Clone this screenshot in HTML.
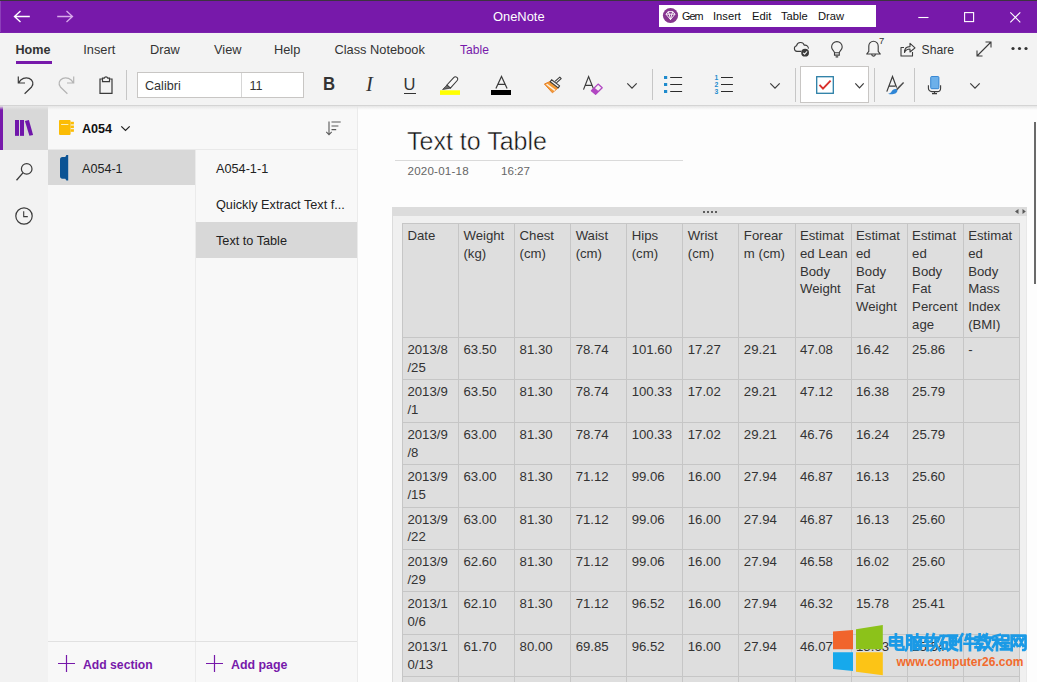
<!DOCTYPE html>
<html>
<head>
<meta charset="utf-8">
<title>OneNote</title>
<style>
*{box-sizing:border-box;margin:0;padding:0}
html,body{width:1037px;height:682px;overflow:hidden}
body{position:relative;background:#f3f3f3;font-family:"Liberation Sans",sans-serif;color:#222;font-size:12.8px}
.abs{position:absolute}
.t{position:absolute;white-space:nowrap;line-height:1}
svg{position:absolute;overflow:visible}
/* title bar */
#titlebar{left:0;top:0;width:1037px;height:32px;background:#7719aa}
#topline{left:0;top:0;width:1037px;height:1px;background:#3c3340}
#gem{left:659px;top:5px;width:216.700px;height:21.600px;background:#fff}
/* ribbon */
#ribbon{left:0;top:32px;width:1037px;height:73px;background:#f3f3f3}
#ribbonline{left:0;top:105px;width:1037px;height:1px;background:#d4d4d4}
#ribbonshadow{left:0;top:106px;width:1037px;height:4px;background:linear-gradient(#e6e6e6,rgba(240,240,240,0))}
#tbedge{left:0;top:32px;width:1037px;height:1px;background:#7b22ad}
#leftedge{left:0;top:1px;width:1px;height:31px;background:#8d3fba}
.sep{position:absolute;width:1px;background:#c6c6c6}
.box{position:absolute;background:#fff;border:1px solid #c8c6c4}
/* left */
#rail{left:0;top:105px;width:48px;height:577px;background:#f2f2f2}
#railsel{left:0;top:106px;width:48px;height:44px;background:#d8d8d8}
#railbar{left:0;top:106px;width:3px;height:44px;background:#7719aa}
#nav{left:48px;top:105px;width:310px;height:577px;background:#f8f8f8}
#secsel{left:48px;top:150px;width:147px;height:35px;background:#d8d8d8}
#pagesel{left:196px;top:222px;width:161px;height:36px;background:#d8d8d8}
#content{left:358px;top:105px;width:679px;height:577px;background:#fdfdfd}
.vline{position:absolute;width:1px;background:#ebebeb}
.hline{position:absolute;height:1px;background:#e1e1e1}
/* table */
#tcont{left:392px;top:207px;width:635px;height:475px;background:#f0f0f0;border-left:1px solid #dcdcdc;border-right:1px solid #e8e8e8}
#tbar{left:392px;top:207px;width:635px;height:9px;background:#dcdcdc}
table{position:absolute;left:402px;top:223px;border-collapse:collapse;table-layout:fixed;width:618px;font-size:13.2px;color:#333;background:#dedede}
td{border:1px solid #c6c6c6;vertical-align:top;padding:3px 0 0 4.400px;line-height:17.8px;white-space:nowrap;overflow:hidden}
tr.h td{height:114px}
tr.r td{height:42.4px}
</style>
</head>
<body>
<div class="abs" id="titlebar"></div>
<div class="abs" id="topline"></div>
<div class="abs" id="ribbon"></div>
<div class="abs" id="tbedge"></div>
<div class="abs" id="leftedge"></div>

<!-- TITLEBAR -->
<div id="tb">
<svg style="left:13.200px;top:9.800px" width="18" height="13" viewBox="0 0 18 13"><path d="M16.800 6.500H1.500M7.500 1L1.500 6.500L7.500 12" fill="none" stroke="#fff" stroke-width="1.4"/></svg>
<svg style="left:55.800px;top:9.800px" width="18" height="13" viewBox="0 0 18 13"><path d="M1.200 6.500H16.500M10.500 1L16.500 6.500L10.500 12" fill="none" stroke="#d9aaeb" stroke-width="1.3"/></svg>
<div class="t" style="left:493px;top:11px;color:#fff;font-size:12.900px">OneNote</div>
<div class="abs" id="gem"></div>
<svg style="left:662px;top:7.300px" width="17" height="17" viewBox="0 0 17 17"><circle cx="8.5" cy="8.5" r="7.600" fill="#86368f"/><path d="M4 7.2L6.2 4.6H10.8L13 7.2L8.5 12.6Z M4 7.2H13 M6.2 4.6L7.2 7.2L8.5 12.6L9.8 7.2L10.8 4.6" fill="none" stroke="#fff" stroke-width="0.9" stroke-linejoin="round"/></svg>
<div class="t" style="left:682px;top:10.500px;color:#111;font-size:10.800px;letter-spacing:-0.900px">Gem</div>
<div class="t" style="left:713px;top:10.500px;color:#111;font-size:11.200px">Insert</div>
<div class="t" style="left:752px;top:10.500px;color:#111;font-size:11.200px">Edit</div>
<div class="t" style="left:781px;top:10.500px;color:#111;font-size:11.200px">Table</div>
<div class="t" style="left:818px;top:10.500px;color:#111;font-size:11.200px">Draw</div>
<svg style="left:917.500px;top:10.700px" width="12" height="12" viewBox="0 0 12 12"><path d="M0.300 6.500H10.500" stroke="#fff" stroke-width="1.100"/></svg>
<svg style="left:963.800px;top:11.800px" width="11" height="11" viewBox="0 0 11 11"><rect x="0.600" y="0.600" width="9" height="9" fill="none" stroke="#fff" stroke-width="1.100"/></svg>
<svg style="left:1009.800px;top:11.700px" width="11" height="11" viewBox="0 0 11 11"><path d="M0.300 0.300L10.300 10.300M10.300 0.300L0.300 10.300" stroke="#fff" stroke-width="1.100"/></svg>
</div>

<!-- TABS -->
<div id="tabs">
<div class="t" style="left:15.5px;top:44px;font-weight:bold;font-size:12.6px;color:#333">Home</div>
<div class="abs" style="left:16px;top:61px;width:36px;height:3px;background:#7719aa"></div>
<div class="t" style="left:83.300px;top:44px;color:#333">Insert</div>
<div class="t" style="left:150px;top:44px;color:#333">Draw</div>
<div class="t" style="left:214px;top:44px;color:#333">View</div>
<div class="t" style="left:274px;top:44px;color:#333">Help</div>
<div class="t" style="left:334.5px;top:44px;color:#333">Class Notebook</div>
<div class="t" style="left:460px;top:44px;color:#7719aa;font-size:12.100px">Table</div>
<div class="t" style="left:921.500px;top:44px;color:#333;font-size:12.200px">Share</div>
<div class="t" style="left:879px;top:36px;color:#333;font-size:9.500px">7</div>
</div>

<!-- TOP RIGHT ICONS -->
<div id="tri">
<!-- cloud -->
<svg style="left:793px;top:42px" width="17" height="15" viewBox="0 0 17 15"><path d="M8.300 9.400H4A2.900 2.900 0 0 1 3.600 3.700A4 4 0 0 1 11.300 3.200A3.300 3.300 0 0 1 15.400 6.600" fill="none" stroke="#3b3b3b" stroke-width="1.100"/><circle cx="12.100" cy="10.700" r="3.900" fill="#3b3b3b"/><path d="M10.200 10.800L11.600 12.200L14.100 9.400" fill="none" stroke="#f3f3f3" stroke-width="1.100"/></svg>
<!-- bulb -->
<svg style="left:831px;top:40.500px" width="12" height="17" viewBox="0 0 12 17"><path d="M3.500 11.800C3.500 10 0.600 8.800 0.600 5.900A5.300 5.300 0 0 1 11.200 5.900C11.200 8.800 8.300 10 8.300 11.800 M3.500 11.800V14.100H8.300V11.800Z M4.600 15.900H7.200" fill="none" stroke="#3b3b3b" stroke-width="1.100"/></svg>
<!-- bell -->
<svg style="left:865.500px;top:40px" width="15" height="17" viewBox="0 0 15 17"><path d="M0.700 14L2.800 11.300V5.900A4.700 4.700 0 0 1 12.200 5.900V11.300L14.300 14Z M5.700 14.300A1.800 1.800 0 0 0 9.300 14.300" fill="none" stroke="#3b3b3b" stroke-width="1.100" stroke-linejoin="round"/></svg>
<!-- share -->
<svg style="left:900px;top:41px" width="16" height="16" viewBox="0 0 16 16"><path d="M4 6.5H1V15H12.5V11 M4.5 11.5C4.5 7.6 7 5.6 10 5.6V2.4L15 6.8L10 11V8C7.6 8 5.6 9 4.5 11.5Z" fill="none" stroke="#3b3b3b" stroke-width="1.1" stroke-linejoin="round"/></svg>
<!-- expand -->
<svg style="left:976px;top:41px" width="16" height="16" viewBox="0 0 16 16"><path d="M1 15L15 1 M9.5 1H15V6.5 M1 9.5V15H6.5" fill="none" stroke="#3b3b3b" stroke-width="1.1"/></svg>
<!-- dots -->
<svg style="left:1011px;top:46px" width="17" height="5" viewBox="0 0 17 5"><circle cx="2" cy="2.5" r="1.600" fill="#333"/><circle cx="8.500" cy="2.5" r="1.600" fill="#333"/><circle cx="15" cy="2.5" r="1.600" fill="#333"/></svg>
</div>

<!-- TOOLBAR -->
<div id="toolbar">
<!-- undo -->
<svg style="left:17px;top:75px" width="18" height="19" viewBox="0 0 18 19"><path d="M1.300 1.400V8H8 M1.800 7.600C4 3.600 8.500 1.800 12.200 3.400C16 5 17 9 14.600 12L7.600 18.800" fill="none" stroke="#3b3b3b" stroke-width="1.2"/></svg>
<!-- redo -->
<svg style="left:57px;top:75px" width="18" height="19" viewBox="0 0 18 19"><path d="M16.700 1.400V8H10 M16.200 7.600C14 3.600 9.500 1.800 5.800 3.400C2 5 1 9 3.400 12L10.400 18.800" fill="none" stroke="#b4b4b4" stroke-width="1.2"/></svg>
<!-- clipboard -->
<svg style="left:99px;top:75px" width="15" height="20" viewBox="0 0 15 20"><path d="M3.500 4H1V18.400H13V4H10.500 M3.500 6.600V3.200H5.200A1.900 1.900 0 0 1 8.800 3.200H10.500V6.600Z" fill="none" stroke="#3b3b3b" stroke-width="1.200"/></svg>
<div class="sep" style="left:126px;top:70px;height:30px"></div>
<div class="box" style="left:137px;top:72px;width:167px;height:26px"></div>
<div class="sep" style="left:241px;top:73px;height:24px;background:#d6d6d6"></div>
<div class="t" style="left:145px;top:80px;color:#333;font-size:12.600px">Calibri</div>
<div class="t" style="left:249.500px;top:80px;color:#333;font-size:12.600px">11</div>
<div class="t" style="left:323px;top:74.300px;color:#333;font-size:19px;font-weight:bold;transform:scaleX(0.880);transform-origin:0 0">B</div>
<div class="t" style="left:366px;top:73.500px;color:#333;font-size:20.500px;font-style:italic;font-family:'Liberation Serif',serif">I</div>
<div class="t" style="left:403.5px;top:76px;color:#333;font-size:16.5px">U</div>
<div class="abs" style="left:404px;top:93px;width:12px;height:1px;background:#333"></div>
<!-- highlighter -->
<svg style="left:440px;top:75px" width="21" height="20" viewBox="0 0 21 20"><path d="M6.900 10L13.700 2.600C14.500 1.700 15.900 1.600 16.900 2.400C17.900 3.200 18 4.600 17.200 5.500L10.400 13.100Z" fill="#f8f8f8" stroke="#3b3b3b" stroke-width="1.100" stroke-linejoin="round"/><path d="M6.900 10L10.400 13.100L6 13.900L2.600 14.500L5.200 11.800Z" fill="#6a6a6a" stroke="#3b3b3b" stroke-width="0.800" stroke-linejoin="round"/><rect x="0" y="15.300" width="20" height="4.600" fill="#ffff00"/></svg>
<!-- font color -->
<svg style="left:494.500px;top:76px" width="14" height="13" viewBox="0 0 14 13"><path d="M0.900 12.500L6.500 0.400L12.100 12.500M2.800 8.400H10.200" fill="none" stroke="#3b3b3b" stroke-width="1.200"/></svg>
<div class="abs" style="left:490.700px;top:90px;width:20.400px;height:4.700px;background:#000"></div>
<!-- format painter -->
<svg style="left:544px;top:77px" width="18" height="17" viewBox="0 0 18 17"><path d="M0.400 7L6.500 4.300L14.400 10.600L8.400 15.800Z" fill="#f29a36" stroke="#e8822a" stroke-width="1" stroke-linejoin="round"/><path d="M3.200 6.800L11.500 12.800L10.300 13.900L2 7.400Z" fill="#fdf1e2"/><path d="M7.600 2.700L15.600 8.900L14.200 10.900L6.200 4.700Z" fill="#f3f3f3" stroke="#3b3b3b" stroke-width="1.100" stroke-linejoin="round"/><path d="M12.400 5.800L17.200 1.600L15.800 0.200L11 4.300" fill="#f3f3f3" stroke="#3b3b3b" stroke-width="1.100" stroke-linejoin="round"/></svg>
<!-- clear formatting -->
<svg style="left:583px;top:76px" width="20" height="19" viewBox="0 0 20 19"><path d="M0.500 13.600L5.600 0.600L10.800 13.600M2.200 9.300H9.100" fill="none" stroke="#3b3b3b" stroke-width="1.200"/><path d="M8.400 14.800L15.100 8.100L19.200 11.700L12.600 18.300Z" fill="#f3f3f3" stroke="#b146c2" stroke-width="1.300" stroke-linejoin="round"/><path d="M8.400 14.800L11.500 11.700L15.700 15.300L12.600 18.300Z" fill="#b146c2"/></svg>
<svg style="left:627px;top:82.500px" width="10" height="6" viewBox="0 0 10 6"><path d="M0.300 0.400L5 5.200L9.700 0.400" fill="none" stroke="#3b3b3b" stroke-width="1.200"/></svg>
<div class="sep" style="left:652px;top:69px;height:31px"></div>
<!-- bullets -->
<svg style="left:663px;top:76px" width="20" height="17" viewBox="0 0 20 17"><rect x="1" y="0" width="3.200" height="3" fill="#1e8bcd"/><rect x="1" y="7" width="3.200" height="3" fill="#1e8bcd"/><rect x="1" y="14" width="3.200" height="3" fill="#1e8bcd"/><path d="M7.200 1.500H19.100M7.200 8.500H19.100M7.200 15.500H19.100" stroke="#2b2b2b" stroke-width="1.200"/></svg>
<!-- numbered -->
<svg style="left:714px;top:75px" width="20" height="19" viewBox="0 0 20 19"><text x="0.600" y="5" font-size="6.800" font-weight="bold" fill="#1e8bcd" font-family="Liberation Sans">1</text><text x="0.600" y="12" font-size="6.800" font-weight="bold" fill="#1e8bcd" font-family="Liberation Sans">2</text><text x="0.600" y="19" font-size="6.800" font-weight="bold" fill="#1e8bcd" font-family="Liberation Sans">3</text><path d="M7 2.500H18.900M7 9.500H18.900M7 16.500H18.900" stroke="#2b2b2b" stroke-width="1.200"/></svg>
<svg style="left:769.500px;top:82.500px" width="10" height="6" viewBox="0 0 10 6"><path d="M0.300 0.400L5 5.200L9.700 0.400" fill="none" stroke="#3b3b3b" stroke-width="1.200"/></svg>
<div class="sep" style="left:795px;top:68px;height:34px"></div>
<div class="box" style="left:800px;top:66px;width:69px;height:37px"></div>
<svg style="left:816px;top:76px" width="18" height="18" viewBox="0 0 18 18"><rect x="0.700" y="0.700" width="16.600" height="16.600" fill="#fff" stroke="#2a7ea6" stroke-width="1.300"/><path d="M3.500 8.800L7 12.600L14.600 4.600" fill="none" stroke="#d9302c" stroke-width="1.900"/></svg>
<svg style="left:854.500px;top:83px" width="9" height="6" viewBox="0 0 9 6"><path d="M0.300 0.400L4.500 4.800L8.700 0.400" fill="none" stroke="#3b3b3b" stroke-width="1.200"/></svg>
<div class="sep" style="left:874px;top:68px;height:34px"></div>
<!-- A with brush -->
<svg style="left:886px;top:76px" width="19" height="19" viewBox="0 0 19 19"><path d="M0.800 15.600L6.500 0.500L10.600 11.500M3 10.200H9.200" fill="none" stroke="#3b3b3b" stroke-width="1.200"/><path d="M17.100 6L9.900 13.300L11 14.400L18.100 7Z" fill="#4a4a4a"/><path d="M10 12.900C7.600 12.700 6.300 13.900 5.700 15.300C5.100 16.700 3.600 17.600 2 17.700C5 18.900 10.800 18.600 11.500 14.500Z" fill="#2f86d6"/></svg>
<div class="sep" style="left:914px;top:68px;height:34px"></div>
<!-- mic -->
<svg style="left:927px;top:75px" width="15" height="20" viewBox="0 0 15 20"><rect x="3.700" y="1.500" width="8.200" height="12.200" rx="1" fill="#6cb0ea" stroke="#2a7fd0" stroke-width="0.900"/><path d="M1.400 10.200V13.200A3.400 3.400 0 0 0 4.800 16.600H10.200A3.400 3.400 0 0 0 13.600 13.200V10.200 M7.500 16.600V18.400 M5 18.600H10" fill="none" stroke="#3b3b3b" stroke-width="1.100"/></svg>
<svg style="left:970px;top:82.500px" width="10" height="6" viewBox="0 0 10 6"><path d="M0.300 0.400L5 5.200L9.700 0.400" fill="none" stroke="#3b3b3b" stroke-width="1.200"/></svg>
</div>

<!-- LEFT -->
<div class="abs" id="rail"></div>
<div class="abs" id="railsel"></div>
<div class="abs" id="railbar"></div>
<div class="abs" id="nav"></div>
<div class="abs" id="content"></div>
<div class="abs" id="secsel"></div>
<div class="abs" id="pagesel"></div>
<div class="vline" style="left:195px;top:149px;height:533px"></div>
<div class="vline" style="left:357px;top:105px;height:577px"></div>
<div class="hline" style="left:48px;top:641px;width:309px"></div>
<div class="hline" style="left:48px;top:149px;width:309px;background:#e9e9e9"></div>

<div class="abs" id="ribbonline"></div>
<div class="abs" id="ribbonshadow"></div>
<div id="leftitems">
<!-- library icon -->
<svg style="left:15px;top:120px" width="19" height="16" viewBox="0 0 19 16"><rect x="0" y="0" width="4" height="15.850" fill="#7016aa"/><rect x="5" y="0" width="4" height="15.850" fill="#7016aa"/><path d="M9.900 0.900L13.900 0L18.100 15.100L14.400 15.850Z" fill="#7016aa"/></svg>
<!-- search -->
<svg style="left:15.600px;top:163px" width="18" height="18" viewBox="0 0 18 18"><circle cx="10.700" cy="5.900" r="5.300" fill="none" stroke="#3b3b3b" stroke-width="1.200"/><path d="M6.900 9.900L0.500 17.300" stroke="#3b3b3b" stroke-width="1.300"/></svg>
<!-- clock -->
<svg style="left:15px;top:207px" width="18" height="18" viewBox="0 0 18 18"><circle cx="9" cy="9" r="8.200" fill="none" stroke="#3b3b3b" stroke-width="1.200"/><path d="M8.700 4.300V9.600H12.800" fill="none" stroke="#3b3b3b" stroke-width="1.100"/></svg>
<!-- notebook -->
<svg style="left:58.800px;top:120px" width="16" height="15" viewBox="0 0 16 15"><rect x="0" y="0.100" width="11.600" height="14.800" rx="0.800" fill="#fbbc05"/><rect x="11.600" y="1.800" width="3.300" height="2.600" fill="#fbbc05"/><rect x="11.600" y="5.500" width="3.300" height="2.600" fill="#fbbc05"/><rect x="11.600" y="9.200" width="3.300" height="2.600" fill="#fbbc05"/><rect x="2.100" y="4" width="7.300" height="1" fill="#fdeeb5"/></svg>
<div class="t" style="left:82px;top:123px;color:#111;font-size:12.600px;font-weight:bold">A054</div>
<svg style="left:120.600px;top:126.100px" width="9" height="6" viewBox="0 0 9 6"><path d="M0.300 0.400L4.500 4.400L8.700 0.400" fill="none" stroke="#222" stroke-width="1.300"/></svg>
<!-- sort -->
<svg style="left:326px;top:121px" width="15" height="15" viewBox="0 0 15 15"><path d="M3 0.500V13.800M0.300 10.800L3 13.800L5.700 10.800" fill="none" stroke="#5a5a5a" stroke-width="1.100"/><path d="M5.500 1H14.700M5.500 5H12.400M5.500 8.600H10.200" stroke="#5a5a5a" stroke-width="1.100"/></svg>
<!-- section tab icon -->
<svg style="left:60px;top:155px" width="9" height="26" viewBox="0 0 9 26"><path d="M8.200 0V25.600H6.400L5.300 23.800H2.400Q0 23.800 0 21V4.900Q0 2.100 2.400 2.100H5.300L6.400 0Z" fill="#0b5394"/></svg>
<div class="t" style="left:82px;top:163px;color:#222;font-size:12.600px">A054-1</div>
<div class="t" style="left:216px;top:163px;color:#222;font-size:12.700px">A054-1-1</div>
<div class="t" style="left:216px;top:199px;color:#222;font-size:12.700px">Quickly Extract Text f...</div>
<div class="t" style="left:216px;top:235px;color:#222;font-size:12.700px">Text to Table</div>
<!-- add -->
<svg style="left:58px;top:655px" width="17" height="17" viewBox="0 0 17 17"><path d="M8.500 0V17M0 8.500H17" stroke="#7719aa" stroke-width="1.200"/></svg>
<div class="t" style="left:83px;top:658.500px;color:#7719aa;font-size:12.200px;font-weight:bold">Add section</div>
<svg style="left:206px;top:655px" width="17" height="17" viewBox="0 0 17 17"><path d="M8.500 0V17M0 8.500H17" stroke="#7719aa" stroke-width="1.200"/></svg>
<div class="t" style="left:231px;top:658.500px;color:#7719aa;font-size:12.400px;font-weight:bold">Add page</div>
</div>

<!-- CONTENT -->
<div id="page">
<div class="t" style="left:407px;top:129px;color:#111;font-size:25px;-webkit-text-stroke:0.450px #fdfdfd">Text to Table</div>
<div class="hline" style="left:395px;top:160px;width:288px;background:#dadada"></div>
<div class="t" style="left:407.500px;top:164.500px;color:#666;font-size:11.600px;letter-spacing:0.200px">2020-01-18</div>
<div class="t" style="left:501px;top:164.500px;color:#666;font-size:11.600px;letter-spacing:0">16:27</div>
<div class="abs" style="left:1034px;top:122px;width:2px;height:162px;background:#6a6a6a"></div>
<div class="abs" id="tcont"></div>
<div class="abs" id="tbar"></div>
<svg style="left:703px;top:211px" width="14" height="2" viewBox="0 0 14 2"><rect x="0" y="0" width="2" height="2" fill="#5e5e5e"/><rect x="4" y="0" width="2" height="2" fill="#5e5e5e"/><rect x="8" y="0" width="2" height="2" fill="#5e5e5e"/><rect x="12" y="0" width="2" height="2" fill="#5e5e5e"/></svg>
<svg style="left:1014.500px;top:209px" width="11" height="5" viewBox="0 0 11 5"><path d="M3.500 0V5L0 2.500Z M7.500 0V5L10.800 2.500Z" fill="#5a5a5a"/></svg>
<table>
<colgroup><col><col><col><col><col><col><col><col><col><col><col></colgroup>
<tr class="h"><td>Date</td><td>Weight<br>(kg)</td><td>Chest<br>(cm)</td><td>Waist<br>(cm)</td><td>Hips<br>(cm)</td><td>Wrist<br>(cm)</td><td>Forear<br>m (cm)</td><td>Estimat<br>ed Lean<br>Body<br>Weight</td><td>Estimat<br>ed<br>Body<br>Fat<br>Weight</td><td>Estimat<br>ed<br>Body<br>Fat<br>Percent<br>age</td><td>Estimat<br>ed<br>Body<br>Mass<br>Index<br>(BMI)</td></tr>
<tr class="r"><td>2013/8<br>/25</td><td>63.50</td><td>81.30</td><td>78.74</td><td>101.60</td><td>17.27</td><td>29.21</td><td>47.08</td><td>16.42</td><td>25.86</td><td>-</td></tr>
<tr class="r"><td>2013/9<br>/1</td><td>63.50</td><td>81.30</td><td>78.74</td><td>100.33</td><td>17.02</td><td>29.21</td><td>47.12</td><td>16.38</td><td>25.79</td><td></td></tr>
<tr class="r"><td>2013/9<br>/8</td><td>63.00</td><td>81.30</td><td>78.74</td><td>100.33</td><td>17.02</td><td>29.21</td><td>46.76</td><td>16.24</td><td>25.79</td><td></td></tr>
<tr class="r"><td>2013/9<br>/15</td><td>63.00</td><td>81.30</td><td>71.12</td><td>99.06</td><td>16.00</td><td>27.94</td><td>46.87</td><td>16.13</td><td>25.60</td><td></td></tr>
<tr class="r"><td>2013/9<br>/22</td><td>63.00</td><td>81.30</td><td>71.12</td><td>99.06</td><td>16.00</td><td>27.94</td><td>46.87</td><td>16.13</td><td>25.60</td><td></td></tr>
<tr class="r"><td>2013/9<br>/29</td><td>62.60</td><td>81.30</td><td>71.12</td><td>99.06</td><td>16.00</td><td>27.94</td><td>46.58</td><td>16.02</td><td>25.60</td><td></td></tr>
<tr class="r"><td>2013/1<br>0/6</td><td>62.10</td><td>81.30</td><td>71.12</td><td>96.52</td><td>16.00</td><td>27.94</td><td>46.32</td><td>15.78</td><td>25.41</td><td></td></tr>
<tr class="r"><td>2013/1<br>0/13</td><td>61.70</td><td>80.00</td><td>69.85</td><td>96.52</td><td>16.00</td><td>27.94</td><td>46.07</td><td>15.63</td><td>25.54</td><td></td></tr>
<tr class="r"><td>&nbsp;</td><td></td><td></td><td></td><td></td><td></td><td></td><td></td><td></td><td></td><td></td></tr>
</table>
</div>

<!-- WATERMARK -->
<div id="wm">
<svg style="left:833px;top:625px" width="50" height="51" viewBox="0 0 50 51">
<path d="M0 6.500L20 4.900V24.300H0Z" fill="#f1642c"/>
<path d="M23 4.200L49.800 0V24.300H23Z" fill="#8cc21a"/>
<path d="M0 27.300H20V46L0 44Z" fill="#16a9ec"/>
<path d="M23 27.300H49.800V50.300L23 46.700Z" fill="#fcc416"/>
</svg>
<svg style="left:888px;top:634px" width="140" height="17" viewBox="0 0 140 17"><g fill="none" stroke="#1b9ae6" stroke-width="2.600" stroke-linejoin="round" stroke-linecap="square"><path transform="translate(0.0,0) scale(1.03)" d="M2 3.200H13.500V11H2Z M2 7.100H13.500 M7.700 0.300V13.200Q7.700 15.300 9.800 15.300H15V12.800"/><path transform="translate(17.4,0) scale(1.03)" d="M1.800 1.500V11.500Q1.800 14.500 0.500 15.700 M1.800 1.500H5.800V15.700 M1.800 6H5.800 M1.800 10.300H5.800 M11.500 0.300V3 M7.500 3.300H16 M8.500 6V14.800H15V6 M10 6.500L13.500 12.500 M13.500 6.500L10 12.500"/><path transform="translate(34.9,0) scale(1.03)" d="M0.500 3.500H7.500 M4.300 0.300L2.200 7.500H7.500 M0.300 11.300H8 M4.500 6.500V15.800 M10.500 0.300L8.500 6.500 M10 3.500H16L14.500 7 M12.300 5.500V8Q12 12.500 8 15.700 M12.300 8Q13 12.500 16.200 15.700"/><path transform="translate(52.3,0) scale(1.03)" d="M0.300 1.800H7 M3.800 1.800L0.500 9.500 M2.200 8.200H6.300V14.300H2.200Z M8 1.500H16.200 M9.200 4H15.200V10.500H9.200Z M9.200 7.200H15.200 M12.200 1.500V10.500 M12.200 10.500Q11 14 7.500 15.700 M9.800 11.500Q12 14.800 16.300 15.700"/><path transform="translate(69.8,0) scale(1.03)" d="M4.500 0.300L0.500 7.500 M3 4.500V15.800 M9.200 0.800L7.500 5.800 M8 4.500H16 M6.500 9.500H16.300 M11.800 0.300V15.800"/><path transform="translate(87.2,0) scale(1.03)" d="M0.500 3H8.500 M4.300 0.300V5.800 M0 6H9 M8.300 1L1 9.800 M2.500 9.500H7.200L5 11.800 M5 11V14.300Q5 15.600 3 15.600 M0.300 13H8.800 M11.300 0.300L9.300 6.500 M10.800 3.500H16.300 M14.700 3.500Q14 10.500 8.800 15.700 M10.800 6.500Q12 12.500 16.300 15.700"/><path transform="translate(104.7,0) scale(1.03)" d="M7 0.800L1 2.500 M0.300 5.500H7.800 M4.200 2V15.800 M4.200 6L0.300 12.500 M4.200 6.500L7.800 10.500 M9.200 1.500H15.300V6.200H9.200Z M8.500 9H16 M12.200 9V14.800 M9.500 12H15 M8 15H16.400"/><path transform="translate(122.1,0) scale(1.03)" d="M1.500 1.500V15.800 M1.500 1.500H15V13.800Q15 15.500 12.800 15.500 M3.800 4.500L7.200 11.500 M7.200 4.500L3.800 11.500 M9.300 4.500L12.700 11.500 M12.700 4.500L9.300 11.500"/></g></svg>
<div class="t" style="left:896.500px;top:655.500px;color:#f26a2c;font-size:12px;font-weight:bold">www.computer26.com</div>
</div>
</body>
</html>
